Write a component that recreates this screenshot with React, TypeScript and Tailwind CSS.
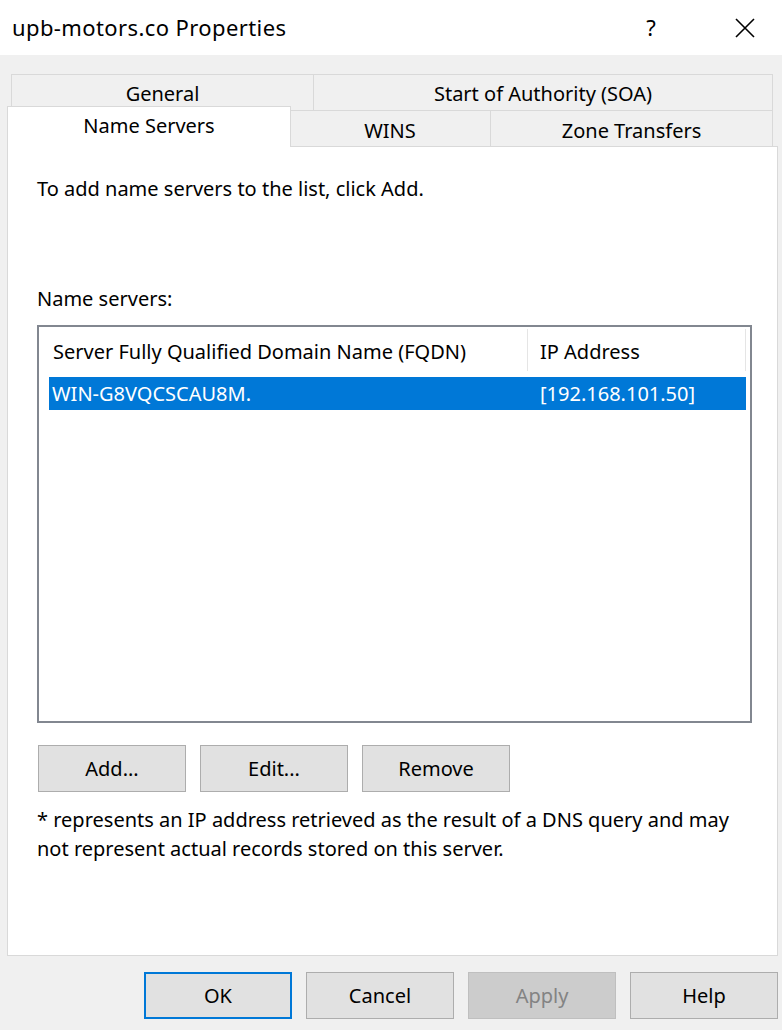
import React from "react";

const font = { fontFamily: '"Segoe UI", "Noto Sans", "Liberation Sans", sans-serif' };

function DlgButton({ label, primary, disabled }: { label: string; primary?: boolean; disabled?: boolean }) {
    let cls = "h-[47px] w-[148px] flex items-center justify-center text-[20px] border ";
    if (disabled) cls += "bg-[#cccccc] border-[#bfbfbf] text-[#838383]";
    else if (primary) cls += "bg-[#e1e1e1] border-2 border-[#0078d7] text-black";
    else cls += "bg-[#e1e1e1] border-[#adadad] text-black";
    return <div className={cls}>{label}</div>;
}

export default function App() {
    return (
        <div className="w-[782px] h-[1030px] bg-[#f0f0f0] overflow-hidden text-black" style={font}>

            {/* title bar */}
            <div className="h-[55px] bg-white flex items-center">
                <div className="pl-[12px] text-[22px] tracking-[0.4px] flex-1">upb-motors.co Properties</div>
                <div className="text-[22px] w-[20px] mr-[74px] text-center">?</div>
                <svg width="20" height="20" viewBox="0 0 20 20" className="mr-[27px]">
                    <path d="M1 1 L19 19 M19 1 L1 19" stroke="#000" strokeWidth="1.6" fill="none" />
                </svg>
            </div>

            {/* tabs row 1 */}
            <div className="mt-[19px] ml-[11px] w-[762px] h-[36px] flex text-[20px]">
                <div className="w-[302px] border-t border-l border-[#d9d9d9] flex items-center justify-center pt-[2px]">General</div>
                <div className="flex-1 border-t border-x border-[#d9d9d9] flex items-center justify-center pt-[2px]">Start of Authority (SOA)</div>
            </div>

            {/* tabs row 2 */}
            <div className="h-[36px] flex text-[20px]">
                <div className="relative z-10 ml-[7px] -mt-[4px] h-[41px] w-[284px] bg-white border-t border-x border-[#d9d9d9] flex justify-center pt-[4px]">Name Servers</div>
                <div className="-ml-px w-[200px] border-t border-[#d9d9d9] flex items-center justify-center pt-[4px]">WINS</div>
                <div className="w-[283px] border-t border-x border-[#d9d9d9] flex items-center justify-center pt-[4px]">Zone Transfers</div>
            </div>

            {/* page */}
            <div className="ml-[7px] w-[771px] h-[810px] bg-white border border-[#d9d9d9] pl-[29px] pt-[28px] text-[20px]">
                <div className="h-[28px] leading-[28px]">To add name servers to the list, click Add.</div>
                <div className="mt-[82px] h-[28px] leading-[28px]">Name servers:</div>

                <div className="mt-[12px] w-[715px] h-[398px] border-2 border-[#828790] flex flex-col">
                    <div className="h-[44px] flex">
                        <div className="w-[488px] flex items-center pl-[14px] pt-[6px]">Server Fully Qualified Domain Name (FQDN)</div>
                        <div className="w-px mt-[2px] bg-[#e5e5e5]" />
                        <div className="w-[217px] flex items-center pl-[12px] pt-[6px]">IP Address</div>
                        <div className="w-px mt-[2px] bg-[#e5e5e5]" />
                    </div>
                    <div className="mt-[6px] ml-[10px] w-[697px] h-[33px] bg-[#0078d7] text-white flex items-center">
                        <div className="w-[478px] pl-[3px]">WIN-G8VQCSCAU8M.</div>
                        <div className="pl-[13px]">[192.168.101.50]</div>
                    </div>
                </div>

                <div className="mt-[22px] flex gap-[14px] ml-px">
                    <DlgButton label="Add..." />
                    <DlgButton label="Edit..." />
                    <DlgButton label="Remove" />
                </div>

                <div className="mt-[13px] leading-[29px] w-[715px]">
                    * represents an IP address retrieved as the result of a DNS query and may not represent actual records stored on this server.
                </div>
            </div>

            {/* dialog buttons */}
            <div className="mt-[16px] flex justify-end gap-[14px] pr-[4px]">
                <DlgButton label="OK" primary />
                <DlgButton label="Cancel" />
                <DlgButton label="Apply" disabled />
                <DlgButton label="Help" />
            </div>
        </div>
    );
}
